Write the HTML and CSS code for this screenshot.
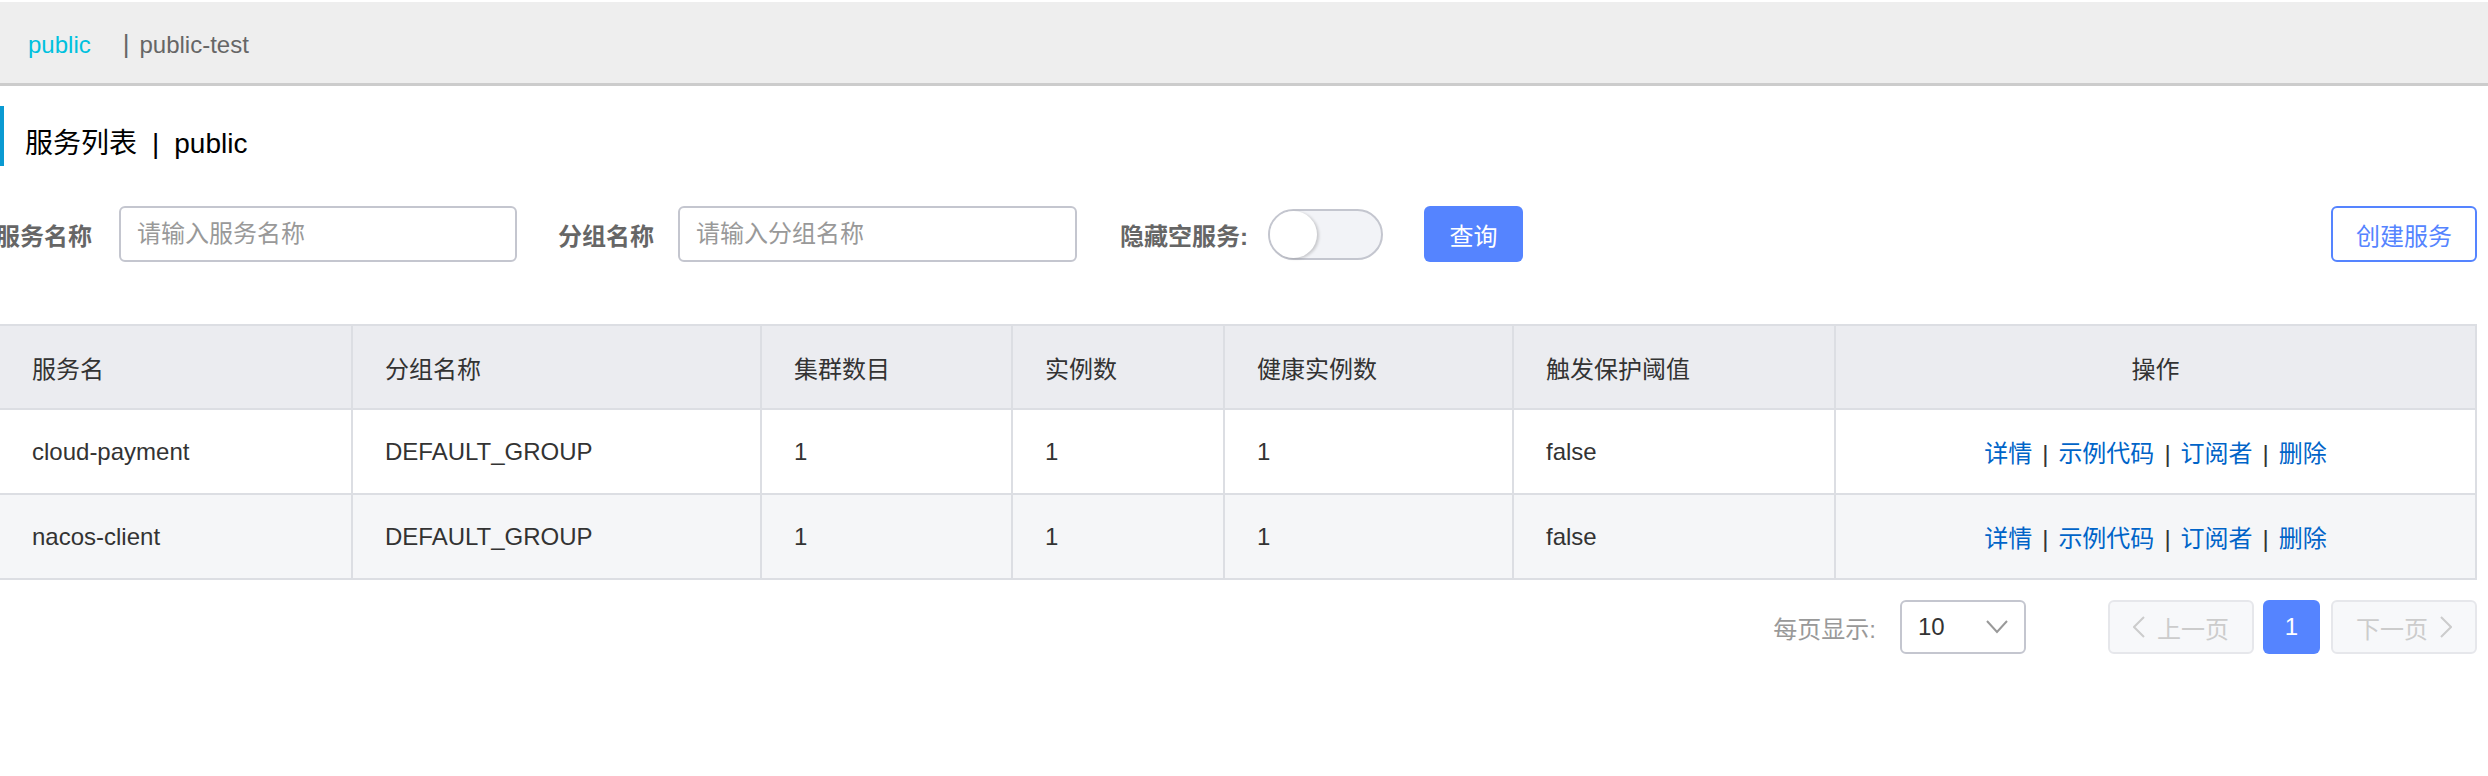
FILE: index.html
```html
<!DOCTYPE html>
<html lang="zh-CN">
<head>
<meta charset="utf-8">
<title>服务列表</title>
<link rel="stylesheet" href="styles.css">
</head>
<body>
<div class="ns-bar">
  <span class="ns-item ns-current">public</span>
  <span class="ns-sep">|</span>
  <span class="ns-item">public-test</span>
</div>
<div class="main">
  <div class="page-title"><span>服务列表</span><span class="title-sep">|</span><span>public</span></div>
  <div class="filter">
    <label class="f-label l1">服务名称</label>
    <input class="text-input w1" type="text" placeholder="请输入服务名称">
    <label class="f-label l2">分组名称</label>
    <input class="text-input w2" type="text" placeholder="请输入分组名称">
    <label class="f-label l3">隐藏空服务:</label>
    <div class="switch"><span class="knob"></span></div>
    <button class="btn primary">查询</button>
    <button class="btn outline">创建服务</button>
  </div>
  <table class="grid">
    <colgroup>
      <col class="c1"><col class="c2"><col class="c3"><col class="c4"><col class="c5"><col class="c6"><col class="c7">
    </colgroup>
    <thead>
      <tr><th>服务名</th><th>分组名称</th><th>集群数目</th><th>实例数</th><th>健康实例数</th><th>触发保护阈值</th><th class="center">操作</th></tr>
    </thead>
    <tbody>
      <tr>
        <td>cloud-payment</td><td>DEFAULT_GROUP</td><td>1</td><td>1</td><td>1</td><td>false</td>
        <td class="center"><a class="op">详情</a><span class="op-sep">|</span><a class="op">示例代码</a><span class="op-sep">|</span><a class="op">订阅者</a><span class="op-sep">|</span><a class="op">删除</a></td>
      </tr>
      <tr class="alt">
        <td>nacos-client</td><td>DEFAULT_GROUP</td><td>1</td><td>1</td><td>1</td><td>false</td>
        <td class="center"><a class="op">详情</a><span class="op-sep">|</span><a class="op">示例代码</a><span class="op-sep">|</span><a class="op">订阅者</a><span class="op-sep">|</span><a class="op">删除</a></td>
      </tr>
    </tbody>
  </table>
  <div class="pager">
    <span class="pager-label">每页显示:</span>
    <div class="select"><span>10</span><svg class="chev" width="22" height="14" viewBox="0 0 22 14"><polyline points="1,1 11,12 21,1" fill="none" stroke="#999" stroke-width="2"/></svg></div>
    <div class="pg-btn prev"><svg width="12" height="22" viewBox="0 0 12 22"><polyline points="11,1 1,11 11,21" fill="none" stroke="#ccc" stroke-width="2"/></svg><span>上一页</span></div>
    <div class="pg-num">1</div>
    <div class="pg-btn next"><span>下一页</span><svg width="12" height="22" viewBox="0 0 12 22"><polyline points="1,1 11,11 1,21" fill="none" stroke="#ccc" stroke-width="2"/></svg></div>
  </div>
</div>
</body>
</html>
```
FILE: styles.css
```css
* { box-sizing: border-box; }
html, body { margin: 0; padding: 0; background: #fff; }
body {
  font-family: "Liberation Sans", "Noto Sans CJK SC", sans-serif;
  font-size: 24px;
  color: #333;
  overflow: hidden;
}

.ns-bar {
  margin-top: 2px;
  height: 84px;
  background: #eeeeee;
  border-bottom: 3px solid #cccccc;
  display: flex;
  align-items: center;
  padding: 4px 0 0 28px;
  font-size: 24px;
  color: #666;
}
.ns-current { color: #00c1de; }
.ns-sep { margin: 0 10px 0 32px; color: #666; font-size: 26px; }

.main { padding-right: 11px; }

.page-title {
  margin-top: 20px;
  height: 60px;
  border-left: 4px solid #0a9ad2;
  padding: 15px 0 0 21px;
  line-height: 45px;
  font-size: 28px;
  color: #000;
  display: flex;
}
.title-sep { margin: 0 15px; }

.filter {
  margin-top: 40px;
  height: 56px;
  display: flex;
  align-items: center;
}
.f-label {
  font-weight: bold;
  color: #666;
  font-size: 24px;
  white-space: nowrap;
}
.l1 { margin-left: -4px; margin-right: 27px; }
.l2 { margin-left: 41px; margin-right: 24px; }
.l3 { margin-left: 43px; margin-right: 20px; }
.text-input {
  height: 56px;
  border: 2px solid #c4c6cf;
  border-radius: 6px;
  padding: 0 16px;
  font-family: "Liberation Sans", "Noto Sans CJK SC", sans-serif;
  font-size: 24px;
  color: #333;
  outline: none;
  background: #fff;
}
.text-input::placeholder { color: #999; }
.w1 { width: 398px; }
.w2 { width: 399px; }

.switch {
  width: 115px;
  height: 51px;
  border: 2px solid #c4c6cf;
  border-radius: 26px;
  background: #f2f3f7;
  display: flex;
  align-items: center;
  padding-left: 0;
}
.knob {
  width: 47px;
  height: 47px;
  border-radius: 50%;
  background: #fff;
  box-shadow: 2px 1px 3px rgba(0, 0, 0, 0.18);
}

.btn {
  height: 56px;
  border-radius: 6px;
  font-family: "Liberation Sans", "Noto Sans CJK SC", sans-serif;
  font-size: 24px;
  cursor: pointer;
}
.primary {
  margin-left: 41px;
  width: 99px;
  background: #5584ff;
  border: none;
  color: #fff;
}
.outline {
  margin-left: auto;
  width: 146px;
  background: #fff;
  border: 2px solid #5584ff;
  color: #5584ff;
}

.grid {
  margin-top: 62px;
  margin-left: -2px;
  width: calc(100% + 2px);
  border-collapse: collapse;
  table-layout: fixed;
  border: 2px solid #dcdee3;
}
.c1 { width: 353px; }
.c2 { width: 409px; }
.c3 { width: 251px; }
.c4 { width: 212px; }
.c5 { width: 289px; }
.c6 { width: 322px; }
.c7 { width: auto; }
.grid th, .grid td {
  border: 2px solid #dcdee3;
  padding: 0 32px;
  text-align: left;
  font-weight: normal;
  font-size: 24px;
  color: #333;
  white-space: nowrap;
}
.grid th { background: #ebecf0; height: 84px; }
.grid td { background: #fff; height: 85px; }
.grid tr.alt td { background: #f5f6f8; }
.grid .center { text-align: center; }
.op { color: #0064c8; text-decoration: none; }
.op-sep { margin: 0 10px; color: #333; }

.pager {
  margin-top: 20px;
  height: 54px;
  display: flex;
  align-items: center;
  justify-content: flex-end;
}
.pager-label { color: #999; margin-right: 24px; }
.select {
  width: 126px;
  height: 54px;
  border: 2px solid #c4c6cf;
  border-radius: 6px;
  display: flex;
  align-items: center;
  justify-content: space-between;
  padding: 0 16px 0 16px;
  color: #333;
  margin-right: 82px;
}
.pg-btn {
  width: 146px;
  height: 54px;
  border: 2px solid #e6e7eb;
  background: #f7f8fa;
  border-radius: 6px;
  color: #ccc;
  display: flex;
  align-items: center;
  justify-content: center;
  gap: 12px;
}
.pg-num {
  width: 57px;
  height: 54px;
  background: #5584ff;
  color: #fff;
  border-radius: 6px;
  display: flex;
  align-items: center;
  justify-content: center;
  margin: 0 11px 0 9px;
}
```
